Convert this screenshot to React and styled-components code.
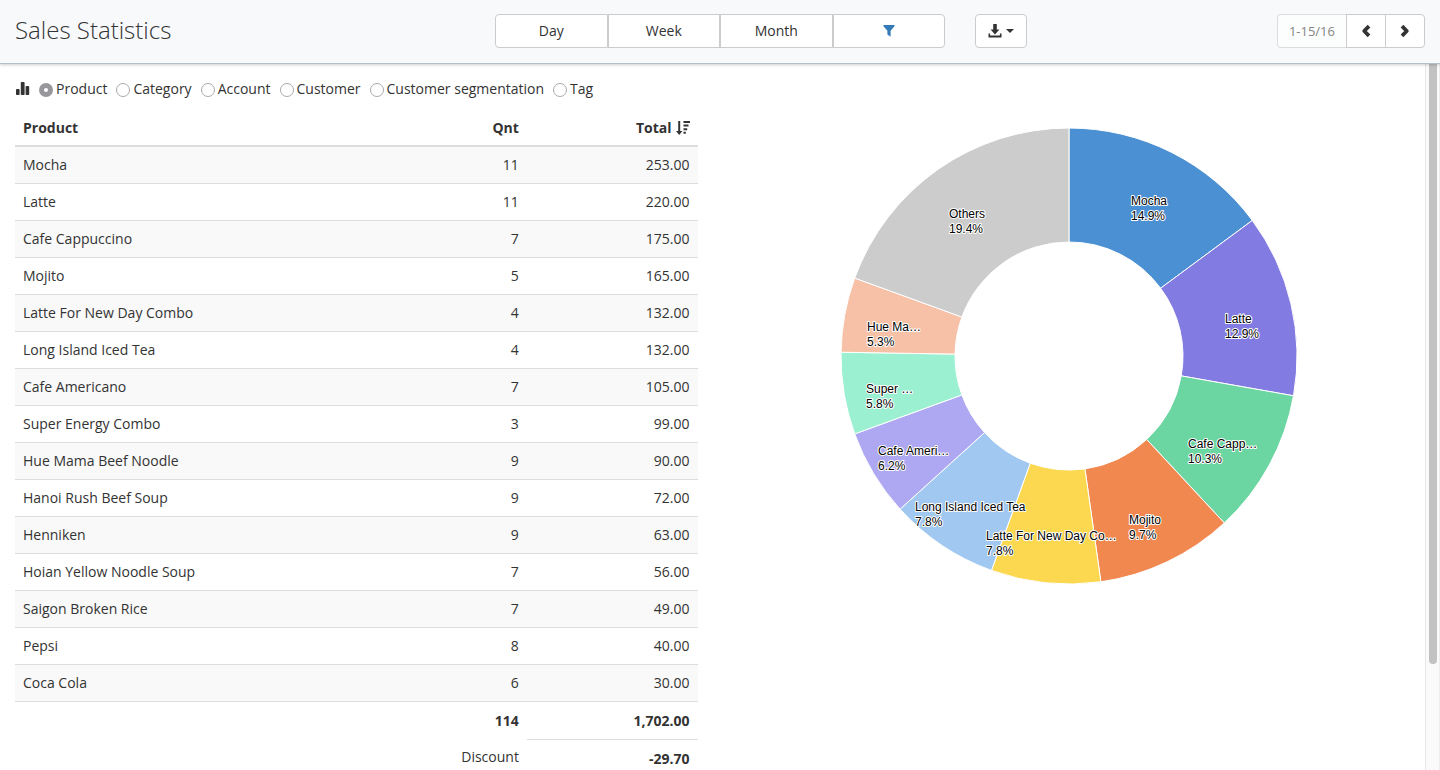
import React, { useState } from "react";
import styled, { createGlobalStyle } from "styled-components";

const PRODUCTS = [
  { name: "Mocha", qnt: 11, total: 253 },
  { name: "Latte", qnt: 11, total: 220 },
  { name: "Cafe Cappuccino", qnt: 7, total: 175 },
  { name: "Mojito", qnt: 5, total: 165 },
  { name: "Latte For New Day Combo", qnt: 4, total: 132 },
  { name: "Long Island Iced Tea", qnt: 4, total: 132 },
  { name: "Cafe Americano", qnt: 7, total: 105 },
  { name: "Super Energy Combo", qnt: 3, total: 99 },
  { name: "Hue Mama Beef Noodle", qnt: 9, total: 90 },
  { name: "Hanoi Rush Beef Soup", qnt: 9, total: 72 },
  { name: "Henniken", qnt: 9, total: 63 },
  { name: "Hoian Yellow Noodle Soup", qnt: 7, total: 56 },
  { name: "Saigon Broken Rice", qnt: 7, total: 49 },
  { name: "Pepsi", qnt: 8, total: 40 },
  { name: "Coca Cola", qnt: 6, total: 30 },
];

const GROUPINGS = ["Product", "Category", "Account", "Customer", "Customer segmentation", "Tag"];

// x / y is the baseline start of the first label line
const SLICES = [
  { label: "Mocha", value: 253, color: "#4b90d2", x: 290, y: 77 },
  { label: "Latte", value: 220, color: "#817be2", x: 384, y: 195 },
  { label: "Cafe Capp…", value: 175, color: "#6bd6a2", x: 347, y: 320 },
  { label: "Mojito", value: 165, color: "#f0884f", x: 288, y: 396 },
  { label: "Latte For New Day Co…", value: 132, color: "#fbd850", x: 145, y: 412 },
  { label: "Long Island Iced Tea", value: 132, color: "#a1c8f0", x: 74, y: 383 },
  { label: "Cafe Ameri…", value: 105, color: "#ada8f1", x: 37, y: 327 },
  { label: "Super …", value: 99, color: "#9cf0d2", x: 25, y: 265 },
  { label: "Hue Ma…", value: 90, color: "#f6c1a6", x: 26, y: 203 },
  { label: "Others", value: 331, color: "#cccccc", x: 108, y: 90 },
];

const CENTER = 228;
const OUTER = 228;
const INNER = 114;

const GlobalStyle = createGlobalStyle`
  * {
    box-sizing: border-box;
  }

  body {
    margin: 0;
    color: #333;
    background: #fff;
    font-family: "Open Sans", "Noto Sans", sans-serif;
    font-size: 14px;
    line-height: 20px;
  }
`;

const Page = styled.div`
  display: flex;
  flex-direction: column;
  height: 100vh;
`;

const Header = styled.header`
  display: grid;
  grid-template-columns: repeat(3, 1fr);
  gap: 30px;
  align-items: start;
  height: 64px;
  padding: 14px 15px 0;
  background: #f8f9fb;
  border-bottom: 1px solid #b4bfcb;
  box-shadow: 0 1px 3px rgba(0, 0, 0, 0.2);
  z-index: 1;
`;

const Title = styled.h1`
  margin: 0;
  font-size: 24px;
  font-weight: 300;
  line-height: 32px;
`;

const ButtonGroup = styled.div`
  display: flex;

  button:first-child {
    border-radius: 4px 0 0 4px;
  }

  button:last-child {
    border-radius: 0 4px 4px 0;
  }
`;

const Button = styled.button`
  display: flex;
  align-items: center;
  justify-content: center;
  flex: ${(props) => (props.$fill ? "1" : "none")};
  gap: 4px;
  height: 34px;
  padding: 0 12px;
  font: inherit;
  color: ${(props) => (props.$accent ? "#337ab7" : "#333")};
  background: #fff;
  border: 1px solid #ccc;
  border-radius: ${(props) => (props.$single ? "4px" : "0")};
  cursor: pointer;
`;

const HeaderActions = styled.div`
  display: flex;
  justify-content: space-between;
`;

const Pager = styled(ButtonGroup)`
  button + button {
    width: 40px;
    padding: 0;
  }

  button + button + button {
    margin-left: -1px;
  }
`;

const PageRange = styled(Button)`
  padding: 0 11px;
  font-size: 13px;
  color: #858585;
  background: #fcfdfd;
  border-color: #ddd;
  border-right: none;
  cursor: not-allowed;
`;

const Body = styled.div`
  display: flex;
  flex: 1;
  min-height: 0;
`;

const Content = styled.main`
  flex: 1;
  min-width: 0;
  padding: 15px 15px 50px;
  overflow-y: auto;
  scrollbar-width: none;
`;

const ScrollRail = styled.div`
  width: 15px;
  padding: 0 2px 0 3px;
  background: #fafafa;
  border-left: 1px solid #e8e8e8;
  border-right: 1px solid #ededed;
`;

const ScrollThumb = styled.div`
  height: 85%;
  background: #c2c2c2;
  border-radius: 0 0 4px 4px;
`;

const Groupings = styled.form`
  display: flex;
  align-items: center;
  gap: 9px;
  height: 20px;
`;

const RadioLabel = styled.label`
  display: flex;
  align-items: center;
  gap: 3px;
  white-space: nowrap;
`;

const Radio = styled.input`
  appearance: none;
  width: 14px;
  height: 14px;
  margin: 1px 0 0;
  background: #fff;
  border: 1px solid #aaa;
  border-radius: 50%;

  &:checked {
    border: 5px solid #98979c;
  }
`;

const Columns = styled.div`
  display: grid;
  grid-template-columns: 1fr 1fr;
  gap: 30px;
  margin-top: 10px;
`;

const Table = styled.table`
  width: 100%;
  align-self: start;
  border-collapse: separate;
  border-spacing: 0;
`;

const HeadCell = styled.th`
  width: ${(props) => props.$width || "auto"};
  padding: 9px 8px 7px;
  font-weight: 700;
  text-align: ${(props) => (props.$number ? "right" : "left")};
  border-bottom: 2px solid #ddd;
`;

const SortButton = styled.button`
  display: inline-flex;
  align-items: center;
  gap: 4px;
  padding: 0;
  font: inherit;
  color: inherit;
  background: none;
  border: none;
  vertical-align: top;
`;

const Row = styled.tr`
  &:nth-child(odd) {
    background: #f9f9f9;
  }
`;

const Cell = styled.td`
  padding: 8px;
  text-align: ${(props) => (props.$number ? "right" : "left")};
  border-bottom: 1px solid #ddd;
`;

const SumCell = styled.td`
  padding: 9px 8px 8px;
  text-align: right;
  font-weight: 700;
  border-bottom: 1px solid ${(props) => (props.$line ? "#ddd" : "transparent")};
`;

const SumLabel = styled.th`
  padding: 7px 8px;
  font-weight: 400;
  text-align: right;
  vertical-align: top;
`;

const ChartPanel = styled.section`
  display: flex;
  justify-content: center;
  align-items: flex-start;
  padding-top: 19px;
`;

const SliceLabel = styled.text`
  font-family: "Liberation Sans", Arial, sans-serif;
  font-size: 12px;
  fill: #000;
  stroke: #fff;
  stroke-width: 2px;
  stroke-linejoin: round;
  paint-order: stroke;
`;

const money = (value) =>
  value.toLocaleString("en-US", { minimumFractionDigits: 2, maximumFractionDigits: 2 });

function point(radius, angle) {
  return `${CENTER + radius * Math.sin(angle)} ${CENTER - radius * Math.cos(angle)}`;
}

function slicePath(start, end) {
  return [
    `M ${point(OUTER, start)}`,
    `A ${OUTER} ${OUTER} 0 0 1 ${point(OUTER, end)}`,
    `L ${point(INNER, end)}`,
    `A ${INNER} ${INNER} 0 0 0 ${point(INNER, start)}`,
    "Z",
  ].join(" ");
}

function BarsIcon() {
  return (
    <svg width="15" height="14" viewBox="0 0 15 14" fill="#333" aria-hidden="true">
      <rect x="1" y="7" width="3.6" height="6" rx="0.8" />
      <rect x="5.8" y="0" width="3.8" height="13" rx="0.8" />
      <rect x="10.6" y="4" width="3.6" height="9" rx="0.8" />
    </svg>
  );
}

function FilterIcon() {
  return (
    <svg width="12" height="12" viewBox="0 0 12 12" fill="currentColor" aria-hidden="true">
      <path d="M0.5 0h11v1.2L7.6 5.8v6L4.4 9.4V5.8L0.5 1.2z" />
    </svg>
  );
}

function DownloadIcon() {
  return (
    <svg width="14" height="15" viewBox="0 0 14 15" fill="currentColor" aria-hidden="true">
      <path d="M5.2 0h3.6v5.6h2.6L7 10.6 2.6 5.6h2.6z" />
      <path d="M0.5 9.4h1.6v2h9.8v-2h1.6v4.2h-13z" />
    </svg>
  );
}

function CaretIcon() {
  return (
    <svg width="8" height="4" viewBox="0 0 8 4" fill="currentColor" aria-hidden="true">
      <path d="M0 0h8L4 4z" />
    </svg>
  );
}

function ChevronIcon({ right }) {
  return (
    <svg
      width="14"
      height="14"
      viewBox="0 0 14 14"
      fill="none"
      stroke="currentColor"
      strokeWidth="3.8"
      strokeLinejoin="round"
      aria-hidden="true"
    >
      <path d={right ? "M4 2.2L8.8 7 4 11.8" : "M10 2.2L5.2 7l4.8 4.8"} />
    </svg>
  );
}

function SortIcon() {
  return (
    <svg width="14" height="14" viewBox="0 0 14 14" fill="currentColor" aria-hidden="true">
      <path d="M2.2 0h2v10h2.2L3.2 14 0 10h2.2z" />
      <path d="M7.5 0H14v2H7.5zM7.5 3.6h5v2h-5zM7.5 7.2h3.7v2H7.5zM7.5 10.8h2.3v2H7.5z" />
    </svg>
  );
}

function DonutChart() {
  const sum = SLICES.reduce((acc, slice) => acc + slice.value, 0);
  let angle = 0;
  const slices = SLICES.map((slice) => {
    const start = angle;
    angle += (slice.value / sum) * Math.PI * 2;
    return { ...slice, d: slicePath(start, angle), percent: `${((slice.value / sum) * 100).toFixed(1)}%` };
  });

  return (
    <svg width="456" height="456" viewBox="0 0 456 456" role="img" aria-label="Share of total by product">
      {slices.map((slice) => (
        <path key={slice.label} d={slice.d} fill={slice.color} stroke="#fff" />
      ))}
      {slices.map((slice) => (
        <SliceLabel key={slice.label} x={slice.x} y={slice.y}>
          {slice.label}
          <tspan x={slice.x} dy="15">
            {slice.percent}
          </tspan>
        </SliceLabel>
      ))}
    </svg>
  );
}

function ProductTable() {
  return (
    <Table>
      <thead>
        <tr>
          <HeadCell>Product</HeadCell>
          <HeadCell $number $width="25%">
            Qnt
          </HeadCell>
          <HeadCell $number $width="25%">
            <SortButton type="button">
              Total
              <SortIcon />
            </SortButton>
          </HeadCell>
        </tr>
      </thead>
      <tbody>
        {PRODUCTS.map((product) => (
          <Row key={product.name}>
            <Cell>{product.name}</Cell>
            <Cell $number>{product.qnt}</Cell>
            <Cell $number>{money(product.total)}</Cell>
          </Row>
        ))}
      </tbody>
      <tfoot>
        <tr>
          <SumCell />
          <SumCell>114</SumCell>
          <SumCell $line>{money(1702)}</SumCell>
        </tr>
        <tr>
          <SumCell />
          <SumLabel scope="row">Discount</SumLabel>
          <SumCell $line>{money(-29.7)}</SumCell>
        </tr>
      </tfoot>
    </Table>
  );
}

export default function App() {
  const [grouping, setGrouping] = useState("Product");

  return (
    <Page>
      <GlobalStyle />
      <Header>
        <Title>Sales Statistics</Title>
        <ButtonGroup>
          <Button $fill>Day</Button>
          <Button $fill>Week</Button>
          <Button $fill>Month</Button>
          <Button $fill $accent aria-label="Filter">
            <FilterIcon />
          </Button>
        </ButtonGroup>
        <HeaderActions>
          <Button $single aria-label="Export">
            <DownloadIcon />
            <CaretIcon />
          </Button>
          <Pager>
            <PageRange disabled>1-15/16</PageRange>
            <Button aria-label="Previous page">
              <ChevronIcon />
            </Button>
            <Button aria-label="Next page">
              <ChevronIcon right />
            </Button>
          </Pager>
        </HeaderActions>
      </Header>
      <Body>
        <Content>
          <Groupings>
            <BarsIcon />
            {GROUPINGS.map((name) => (
              <RadioLabel key={name}>
                <Radio
                  type="radio"
                  name="grouping"
                  checked={grouping === name}
                  onChange={() => setGrouping(name)}
                />
                {name}
              </RadioLabel>
            ))}
          </Groupings>
          <Columns>
            <ProductTable />
            <ChartPanel>
              <DonutChart />
            </ChartPanel>
          </Columns>
        </Content>
        <ScrollRail aria-hidden="true">
          <ScrollThumb />
        </ScrollRail>
      </Body>
    </Page>
  );
}
